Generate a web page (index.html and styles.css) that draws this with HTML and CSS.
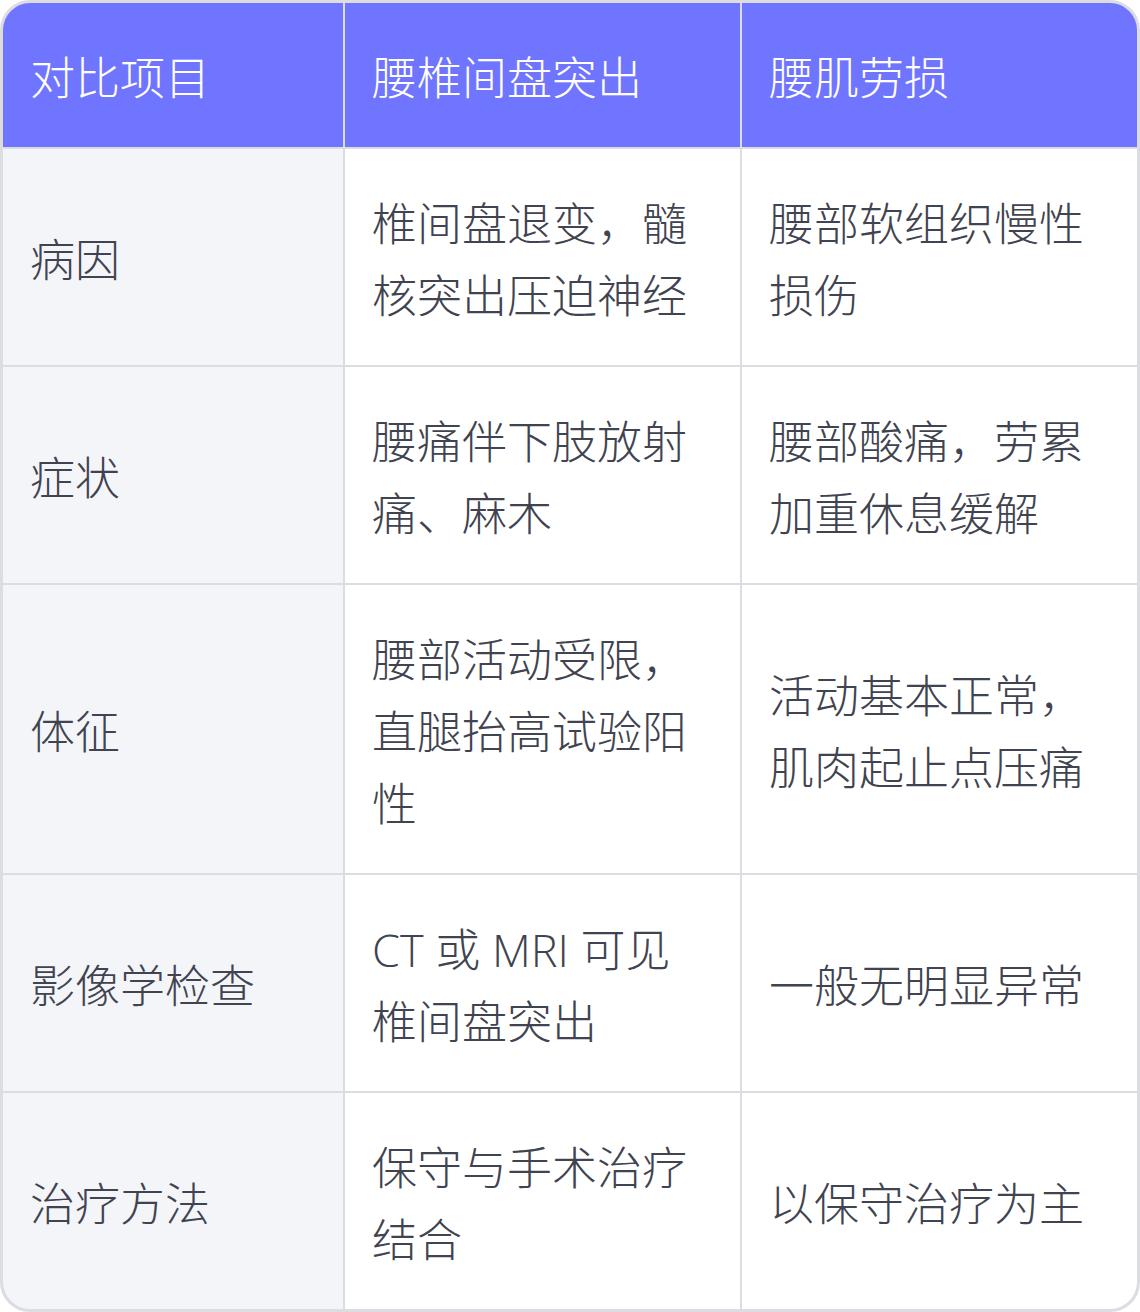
FILE: index.html
```html
<!DOCTYPE html>
<html lang="zh-CN">
<head>
<meta charset="utf-8">
<title>腰椎间盘突出与腰肌劳损对比</title>
<link rel="stylesheet" href="styles.css">
</head>
<body>
<div class="table" role="table">
  <div class="cell head" role="columnheader">对比项目</div>
  <div class="cell head" role="columnheader">腰椎间盘突出</div>
  <div class="cell head" role="columnheader">腰肌劳损</div>

  <div class="cell label">病因</div>
  <div class="cell">椎间盘退变，髓核突出压迫神经</div>
  <div class="cell">腰部软组织慢性损伤</div>

  <div class="cell label">症状</div>
  <div class="cell">腰痛伴下肢放射痛、麻木</div>
  <div class="cell">腰部酸痛，劳累加重休息缓解</div>

  <div class="cell label">体征</div>
  <div class="cell">腰部活动受限，直腿抬高试验阳性</div>
  <div class="cell">活动基本正常，肌肉起止点压痛</div>

  <div class="cell label">影像学检查</div>
  <div class="cell">CT 或 MRI 可见椎间盘突出</div>
  <div class="cell">一般无明显异常</div>

  <div class="cell label">治疗方法</div>
  <div class="cell">保守与手术治疗结合</div>
  <div class="cell">以保守治疗为主</div>
</div>
</body>
</html>
```
FILE: styles.css
```css
html, body {
  margin: 0;
  padding: 0;
  background: #ffffff;
}

.table {
  width: 1140px;
  height: 1312px;
  box-sizing: border-box;
  border: 3px solid #dcdde3;
  border-radius: 30px;
  overflow: hidden;
  display: grid;
  grid-template-columns: 340px 395px 395px;
  grid-auto-rows: auto;
  gap: 2px;
  background: #dcdde3;
  font-family: "Open Sans", "Noto Sans CJK SC", sans-serif;
  font-weight: 300;
  font-size: 45px;
  line-height: 72px;
  color: #404350;
}

.cell {
  background: #ffffff;
  padding: 39px 26px 33px 27px;
  display: flex;
  align-items: center;
  word-break: break-all;
}

.head {
  background: #7075ff;
  color: #ffffff;
}

.label {
  background: #f4f5f9;
}
```
